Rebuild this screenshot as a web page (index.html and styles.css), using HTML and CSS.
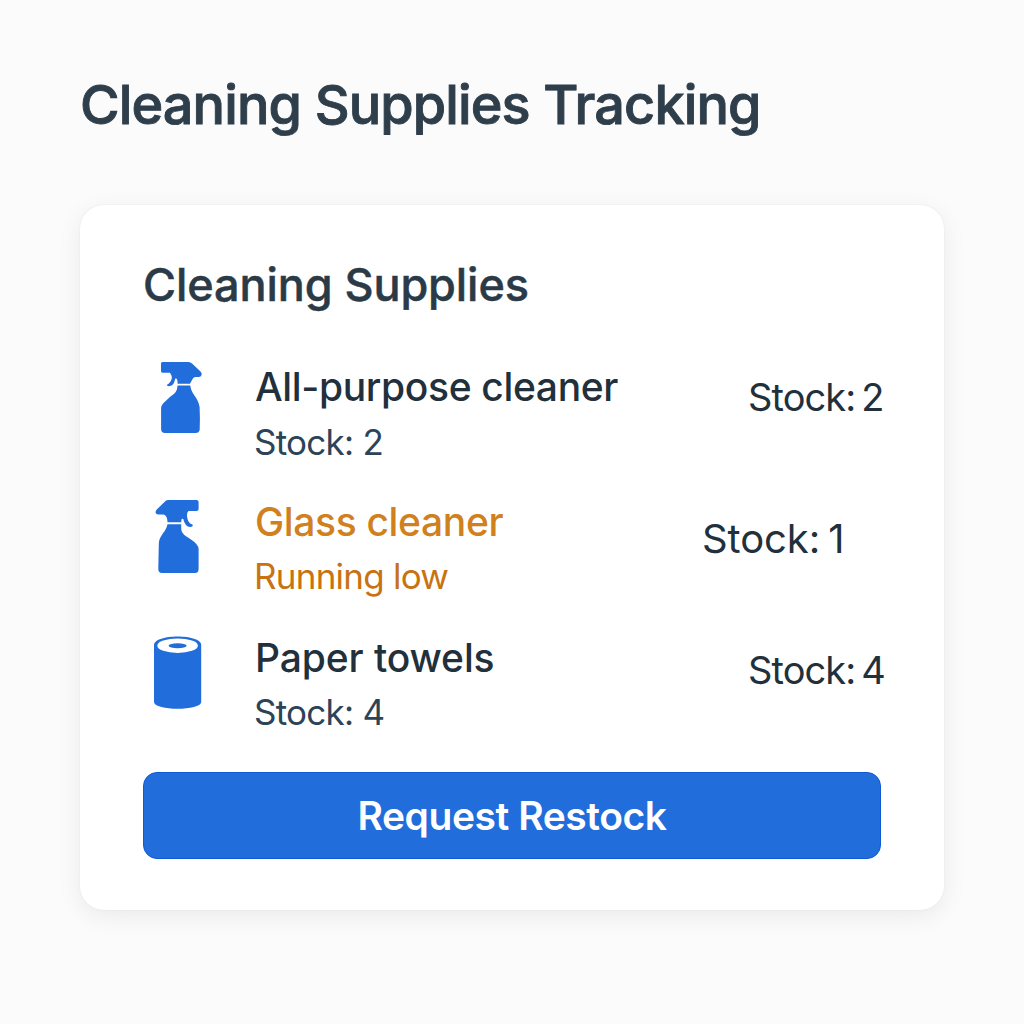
FILE: index.html
```html
<!DOCTYPE html>
<html lang="en">
<head>
<meta charset="utf-8">
<title>Cleaning Supplies Tracking</title>
<link rel="stylesheet" href="styles.css">
</head>
<body>
<main class="page">
  <h1 class="page-title">Cleaning Supplies Tracking</h1>
  <section class="card">
    <h2 class="card-title">Cleaning Supplies</h2>
    <ul class="supplies">
      <li class="supply">
        <svg class="icon" viewBox="0 0 80 95" aria-hidden="true">
          <path d="M22.500 12H48.500Q50.500 12.200 52 13.600L60.500 21.600Q62.300 23.300 61.500 25.300Q60.800 27 59 27H55.500Q53.500 27 52.600 29L50 33.700H37.500Q38 29.500 35.800 28L34.800 30C34.300 33.700 32.300 36.200 28.500 36.200Q26.700 36 27 34.800Q30.500 33 31.800 28.500Q32 25.500 30 22.800H22.500Q21 22.800 21 21V13.500Q21 12 22.500 12Z"/>
          <path d="M37.500 35.500H50.300C51 44 58 47 59.600 57Q60.200 68 59.700 79.500Q59.300 83 55.500 83H25Q21.100 83 21.100 79V58.500Q21.100 55.500 23.500 53L30.500 46.500Q37.600 42.500 37.500 35.500Z"/>
        </svg>
        <div class="info">
          <div class="name">All-purpose cleaner</div>
          <div class="note">Stock: 2</div>
        </div>
        <div class="count">Stock: 2</div>
      </li>
      <li class="supply supply-low">
        <svg class="icon" viewBox="0 0 80 95" aria-hidden="true">
          <path d="M28 10H56.500Q58.600 10 58.600 12V19Q58.600 21 56.500 21H48.500Q46.700 22.800 47 26C47.500 30.500 49 33.500 52.500 34.500Q53.500 36.800 50.500 37C46.500 37 44.500 33.500 43.300 29Q41 28 41.300 32.200H27.500C27.500 28 26 24 22.500 24.500H18Q15.700 24.200 15.500 22.500Q15.500 20.700 17 19.300L24.500 12Q26 10 28 10Z"/>
          <path d="M27.500 34.300H41.200V38C41 44 46 46 51 49.500Q58.600 54.500 58.600 59V79Q58.600 83 55 83H22Q18.300 83 18.300 79L18.800 54C19 45 26 42.500 27.500 34.300Z"/>
        </svg>
        <div class="info">
          <div class="name">Glass cleaner</div>
          <div class="note">Running low</div>
        </div>
        <div class="count">Stock: 1</div>
      </li>
      <li class="supply supply-last">
        <svg class="icon" viewBox="0 0 80 95" aria-hidden="true">
          <path d="M14 20C14 8.500 61.200 8.500 61.200 20V77C61.200 86 14 86 14 77Z"/>
          <ellipse class="hole" cx="37.600" cy="20.700" rx="20.300" ry="7.200"/>
          <ellipse cx="37.600" cy="20.700" rx="9" ry="2.500"/>
        </svg>
        <div class="info">
          <div class="name">Paper towels</div>
          <div class="note">Stock: 4</div>
        </div>
        <div class="count">Stock: 4</div>
      </li>
    </ul>
    <button class="restock" type="button">Request Restock</button>
  </section>
</main>
</body>
</html>
```
FILE: styles.css
```css
* { box-sizing: border-box; }

body {
  margin: 0;
  background: #fbfbfb;
  font-family: Inter, "Liberation Sans", sans-serif;
  color: #22303c;
}

.page {
  height: 1024px;
  padding: 73px 80px 0;
}

.page-title {
  margin: 0 0 68px;
  font-size: 54px;
  line-height: 64px;
  font-weight: 500;
  letter-spacing: -0.88px;
  -webkit-text-stroke: 0.9px currentColor;
  color: #2f3e4b;
  white-space: nowrap;
}

.card {
  height: 705px;
  padding: 53px 63px 0;
  border-radius: 24px;
  background: #fff;
  box-shadow: 0 0 2px rgba(0, 0, 0, .07), 0 6px 24px rgba(0, 0, 0, .07);
}

.card-title {
  margin: 0;
  font-size: 45px;
  line-height: 54px;
  font-weight: 500;
  letter-spacing: -0.08px;
  -webkit-text-stroke: 0.5px currentColor;
  color: #2b3a47;
  white-space: nowrap;
}

.supplies {
  margin: 38px 0 0;
  padding: 0;
  list-style: none;
}

.supply {
  display: grid;
  grid-template-columns: 112px 493px 1fr;
  align-items: start;
  height: 140px;
}

.supply-low { grid-template-columns: 112px 447px 1fr; height: 135px; }
.supply-last { height: 147px; }

.icon {
  width: 80px;
  height: 95px;
  margin-left: -3px;
  fill: #206ddb;
}

.hole { fill: #fff; }

.info { padding-top: 13px; }

.name {
  font-size: 39px;
  line-height: 48px;
  font-weight: 500;
  letter-spacing: -0.35px;
}

.note {
  margin: 9px 0 0 -1px;
  font-size: 35px;
  line-height: 44px;
  letter-spacing: -0.75px;
  color: #2d4358;
}

.count {
  padding-top: 23px;
  font-size: 38px;
  line-height: 48px;
  letter-spacing: -0.9px;
  word-spacing: -4px;
  white-space: nowrap;
}

.supply-low .info { padding-top: 8px; }
.supply-low .name { color: #d0801c; }
.supply-low .note { margin-top: 8px; color: #c87310; }
.supply-low .count {
  padding-top: 25px;
  font-size: 40px;
  letter-spacing: -0.1px;
  word-spacing: -3px;
}
.supply-last .info { padding-top: 9px; }
.supply-last .name { letter-spacing: -0.1px; }
.supply-last .note { margin-top: 8px; }
.supply-last .count { padding-top: 21px; }

.restock {
  display: block;
  width: 738px;
  height: 87px;
  padding: 0;
  border: 1px solid #0f59d5;
  border-radius: 14px;
  background: #206ddb;
  color: #fff;
  font: 600 39px/48px Inter, "Liberation Sans", sans-serif;
  letter-spacing: -0.45px;
}
```
